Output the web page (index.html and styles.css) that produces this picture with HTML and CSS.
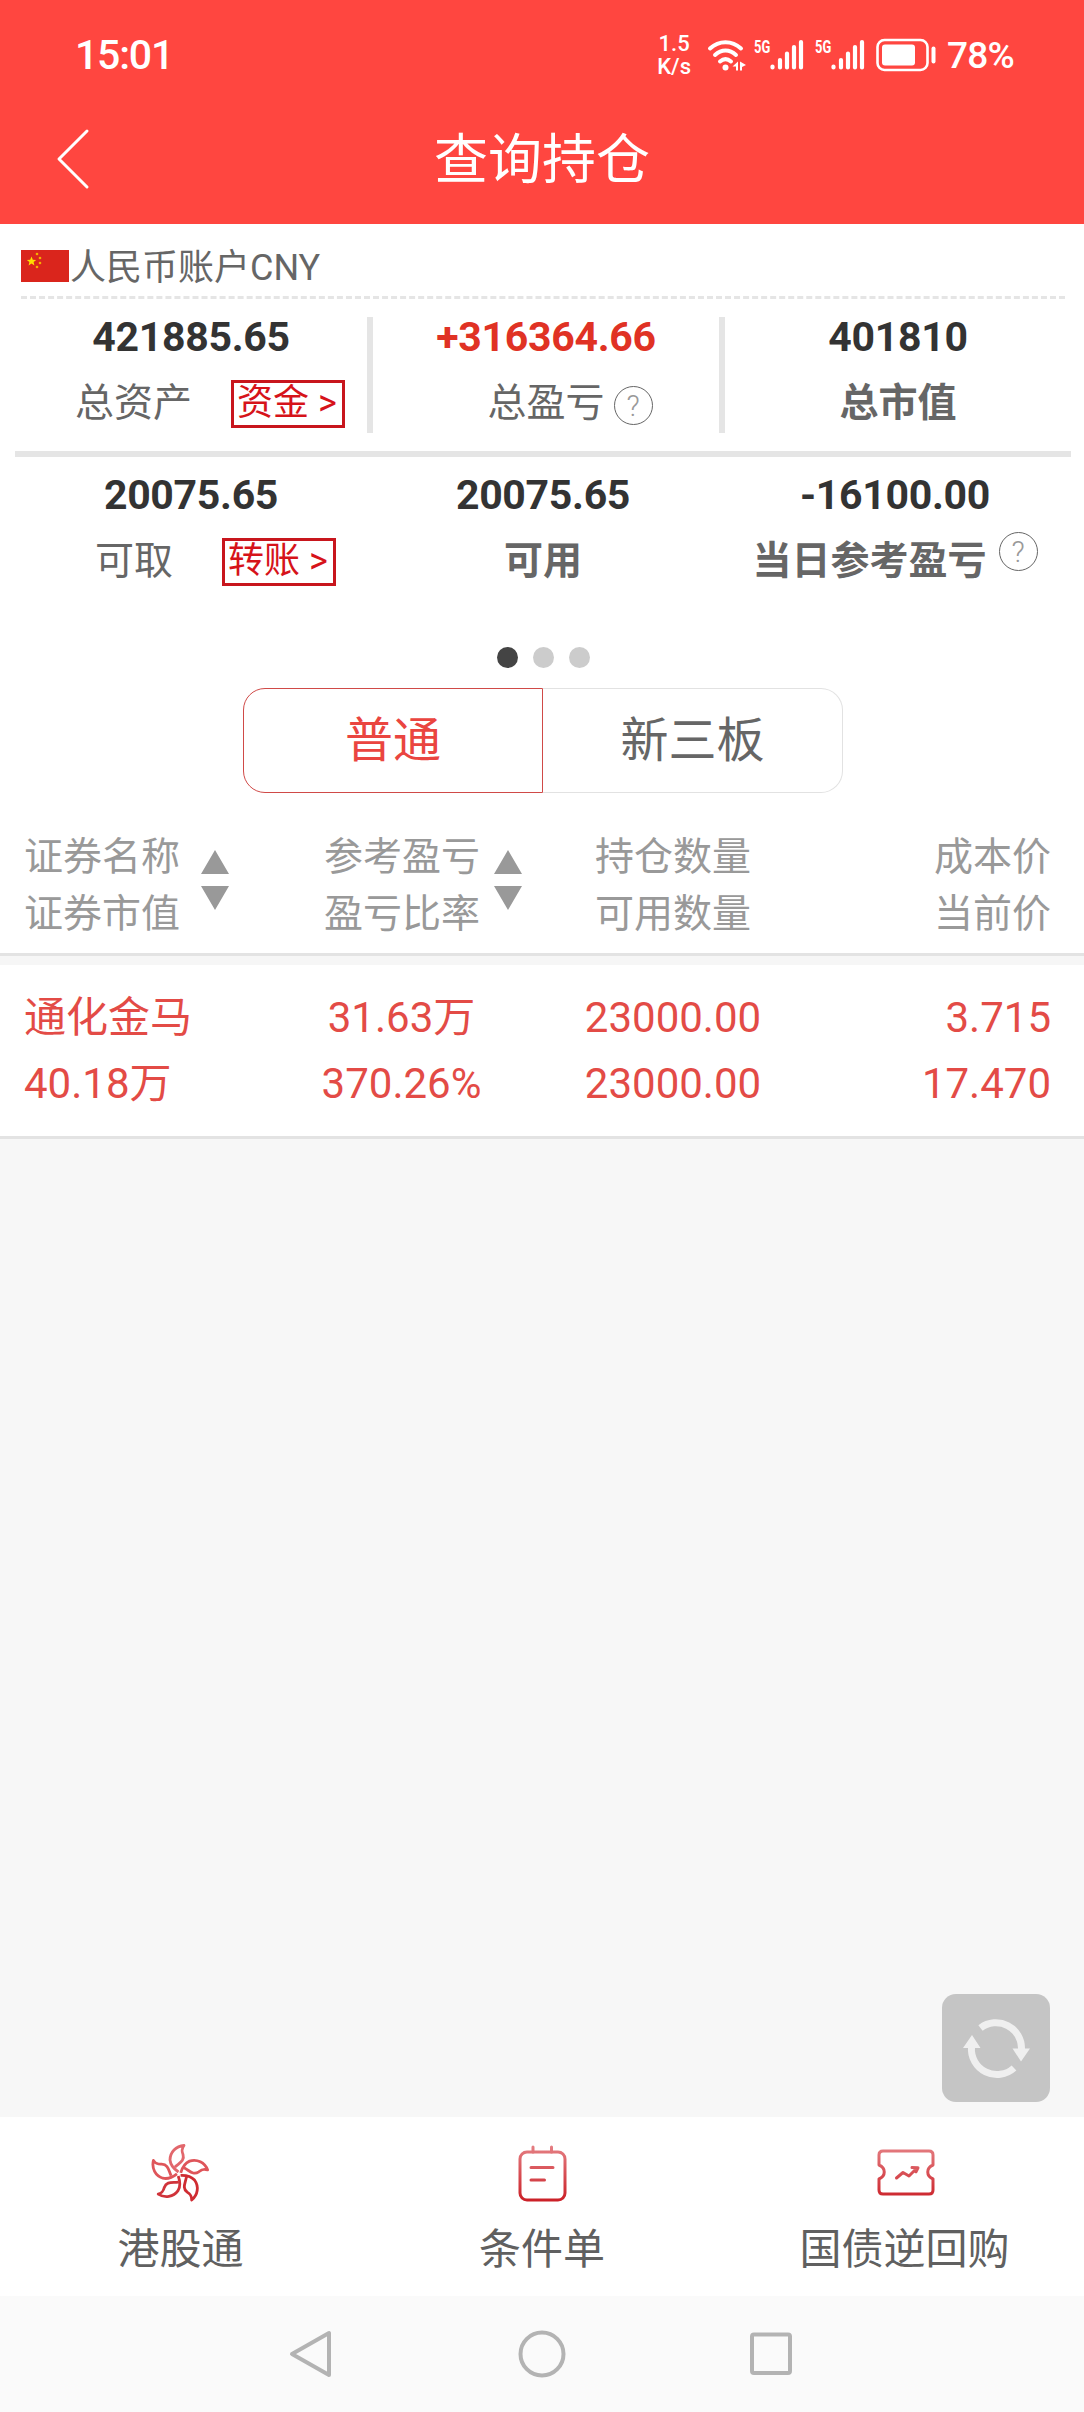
FILE: index.html
```html
<!DOCTYPE html>
<html lang="zh-CN">
<head>
    <meta charset="UTF-8">
    <meta name="viewport" content="width=device-width, initial-scale=1.0">
    <title>查询持仓</title>
    <link rel="stylesheet" href="styles.css">
</head>
<body>
    <div class="page">
        <header class="header">
            <div class="status-bar">
                <span class="time">15:01</span>
                <div class="status-icons">
                    <div class="speed"><span>1.5</span><span>K/s</span></div>
                    <svg class="wifi" width="40" height="34" viewBox="0 0 40 34" fill="none" stroke="#fff" stroke-width="4" stroke-linecap="round">
                        <path d="M3 10.5C12 2 25 2 34 10.5"/>
                        <path d="M8 17C14.5 11 22.5 11 29 17"/>
                        <path d="M13 23.5C16.5 20.5 20.5 20.5 24 23.5"/>
                        <circle cx="18.5" cy="29.5" r="3" fill="#fff" stroke="none"/>
                        <path d="M31 23.5v9h-2v-4h-3.500zM33 23.5v9h2v-3.500l4-2z" fill="#fff" stroke="none"/>
                    </svg>
                    <div class="signal">
                        <span class="net">5G</span>
                        <svg width="34" height="32" viewBox="0 0 34 32" stroke="#fff" stroke-width="4.2" stroke-linecap="round">
                            <path d="M2.5 27.5v1M10 21v7.5M17 14.5v14M24 8v20.5M31 3v25.5"/>
                        </svg>
                    </div>
                    <div class="signal">
                        <span class="net">5G</span>
                        <svg width="34" height="32" viewBox="0 0 34 32" stroke="#fff" stroke-width="4.2" stroke-linecap="round">
                            <path d="M2.5 27.5v1M10 21v7.5M17 14.5v14M24 8v20.5M31 3v25.5"/>
                        </svg>
                    </div>
                    <svg class="battery" width="60" height="34" viewBox="0 0 60 34">
                        <rect x="1.5" y="2" width="50" height="30" rx="7" fill="none" stroke="#fff" stroke-width="2.6"/>
                        <rect x="6" y="6.5" width="33" height="21" rx="3" fill="#fff"/>
                        <rect x="55.5" y="8.5" width="4" height="17" rx="2" fill="#fff"/>
                    </svg>
                    <span class="percent">78%</span>
                </div>
            </div>
            <div class="nav-bar">
                <svg class="back" width="36" height="62" viewBox="0 0 36 62" fill="none" stroke="#fff" stroke-width="3" stroke-linecap="round" stroke-linejoin="round">
                    <path d="M33 3L5 31l28 28"/>
                </svg>
                <h1>查询持仓</h1>
            </div>
        </header>

        <section class="account">
            <div class="account-name">
                <svg width="48" height="32" viewBox="0 0 48 32">
                    <rect width="48" height="32" fill="#da251c"/>
                    <path d="M10.5 6.5l1.3 3.2 3.4.2-2.6 2.2.8 3.3-2.9-1.8-2.9 1.8.8-3.3-2.6-2.2 3.4-.2z" fill="#ffde00"/>
                    <g fill="#f5b000">
                        <circle cx="16" cy="4" r="1.3"/>
                        <circle cx="19" cy="8" r="1.3"/>
                        <circle cx="19" cy="13" r="1.3"/>
                        <circle cx="16" cy="17" r="1.3"/>
                    </g>
                </svg>
                <span>人民币账户CNY</span>
            </div>

            <div class="summary summary-total">
                <div class="cell">
                    <div class="num">421885.65</div>
                    <div class="label label-funds"><span>总资产</span><a class="link-btn">资金 &gt;</a></div>
                </div>
                <div class="cell">
                    <div class="num up">+316364.66</div>
                    <div class="label label-profit"><span>总盈亏</span><i class="help">?</i></div>
                </div>
                <div class="cell">
                    <div class="num">401810</div>
                    <div class="label strong">总市值</div>
                </div>
            </div>
            <div class="summary">
                <div class="cell">
                    <div class="num">20075.65</div>
                    <div class="label label-transfer"><span>可取</span><a class="link-btn">转账 &gt;</a></div>
                </div>
                <div class="cell">
                    <div class="num">20075.65</div>
                    <div class="label strong">可用</div>
                </div>
                <div class="cell">
                    <div class="num">-16100.00</div>
                    <div class="label strong label-day"><span>当日参考盈亏</span><i class="help">?</i></div>
                </div>
            </div>

            <div class="dots">
                <span class="dot active"></span>
                <span class="dot"></span>
                <span class="dot"></span>
            </div>
        </section>

        <div class="tabs">
            <div class="tab active">普通</div>
            <div class="tab">新三板</div>
        </div>

        <section class="holdings">
            <div class="row thead">
                <div class="col sortable">
                    <div>证券名称<br>证券市值</div>
                    <svg class="sort" width="28" height="60" viewBox="0 0 28 60" fill="#999"><path d="M14 0l14 24H0zM14 60l14-24H0z"/></svg>
                </div>
                <div class="col sortable">
                    <div>参考盈亏<br>盈亏比率</div>
                    <svg class="sort" width="28" height="60" viewBox="0 0 28 60" fill="#999"><path d="M14 0l14 24H0zM14 60l14-24H0z"/></svg>
                </div>
                <div class="col">持仓数量<br>可用数量</div>
                <div class="col">成本价<br>当前价</div>
            </div>
            <div class="row tbody">
                <div class="col">通化金马<br>40.18万</div>
                <div class="col">31.63万<br>370.26%</div>
                <div class="col">23000.00<br>23000.00</div>
                <div class="col">3.715<br>17.470</div>
            </div>
        </section>

        <main class="blank">
            <button class="refresh">
                <svg width="108" height="108" viewBox="0 0 108 108">
                    <g fill="none" stroke="#efefef" stroke-width="7">
                        <path d="M38.5 34A25.5 25.5 0 0 1 79.500 55"/>
                        <path d="M72 74A25.5 25.5 0 0 1 29.5 53"/>
                    </g>
                    <path d="M70.500 54.5h17.500L79 67.5zM21 54h17.500L30 41z" fill="#efefef"/>
                </svg>
            </button>
        </main>

        <nav class="shortcuts">
            <a class="shortcut">
                <svg width="60" height="60" viewBox="-28 -31 60 60" fill="none" stroke-width="2.8" stroke-linejoin="round">
                    <defs>
                        <linearGradient id="red" gradientUnits="userSpaceOnUse" x1="0" y1="-28" x2="0" y2="28">
                            <stop offset="0" stop-color="#e58084"/>
                            <stop offset="1" stop-color="#cb2027"/>
                        </linearGradient>
                        <path id="petal" d="M-.5-2C-5-5-8.500-9-9-14C-9-22-3-28 5-28.500C2-24.500 3-22 4-19.500C6-13 0-11-4-7"/>
                    </defs>
                    <use href="#petal" stroke="#e2676c"/>
                    <use href="#petal" stroke="#df555a" transform="rotate(72)"/>
                    <use href="#petal" stroke="#cf2c32" transform="rotate(144)"/>
                    <use href="#petal" stroke="#d0333a" transform="rotate(216)"/>
                    <use href="#petal" stroke="#df555a" transform="rotate(288)"/>
                </svg>
                <span>港股通</span>
            </a>
            <a class="shortcut">
                <svg width="60" height="60" viewBox="-30 -30 60 60" fill="none" stroke="url(#red)" stroke-width="3" stroke-linecap="round">
                    <rect x="-22" y="-21" width="45" height="48" rx="7"/>
                    <path d="M-9-26v5M9.500-26v5M-11-5.500H11M-11 7H2.500"/>
                </svg>
                <span>条件单</span>
            </a>
            <a class="shortcut">
                <svg width="60" height="60" viewBox="-31 -30 60 60" fill="none" stroke="url(#red)" stroke-width="3" stroke-linecap="round" stroke-linejoin="round">
                    <path d="M-23-22H23Q27-22 27-18V-8C20-5 20 3 27 6V17Q27 21 23 21H-23Q-27 21-27 17V6C-20 3-20-5-27-8V-18Q-27-22-23-22Z"/>
                    <path d="M-9.500 5L-3-.5 3 3 11-5M6-5.500l6 .3-2 4"/>
                </svg>
                <span>国债逆回购</span>
            </a>
        </nav>

        <footer class="system-nav">
            <svg width="50" height="50" viewBox="0 0 50 50"><path d="M41 4v42L4 25z"/></svg>
            <svg width="50" height="50" viewBox="0 0 50 50"><circle cx="25" cy="25" r="21.5"/></svg>
            <svg width="50" height="50" viewBox="0 0 50 50"><rect x="6" y="5.500" width="38" height="38.500" rx="2"/></svg>
        </footer>
    </div>
</body>
</html>
```
FILE: styles.css
```css
* {
    box-sizing: border-box;
}
body {
    margin: 0;
    background: #fff;
    font-family: Roboto, "Noto Sans CJK SC", sans-serif;
    color: #666;
}
svg {
    display: block;
    flex-shrink: 0;
}
.page {
    width: 1084px;
    height: 2412px;
    display: flex;
    flex-direction: column;
}

/* 顶部 */
.header {
    height: 224px;
    background: #ff4640;
    color: #fff;
}
.status-bar {
    height: 108px;
    padding: 2px 70px 0 75px;
    display: flex;
    align-items: center;
    justify-content: space-between;
}
.time {
    font-size: 41px;
    font-weight: 500;
    letter-spacing: -1.2px;
}
.status-icons {
    display: flex;
    align-items: center;
}
.speed {
    width: 36px;
    margin-right: 15px;
    display: flex;
    flex-direction: column;
    align-items: center;
    font-size: 22px;
    font-weight: 500;
    line-height: 23px;
}
.wifi {
    margin-right: 7px;
}
.signal {
    display: flex;
    width: 61px;
}
.net {
    width: 16px;
    font-size: 19px;
    font-weight: 700;
    line-height: 16px;
    transform: scaleX(0.68);
    transform-origin: left top;
}
.battery {
    margin-right: 11px;
}
.percent {
    font-size: 37px;
    font-weight: 500;
    letter-spacing: -0.8px;
}
.nav-bar {
    height: 101px;
    padding: 0 54px;
    display: grid;
    grid-template-columns: 36px 1fr 36px;
    align-items: center;
}
.nav-bar h1 {
    margin: 0;
    padding-top: 4px;
    font-size: 54px;
    font-weight: 400;
    line-height: 80px;
    text-align: center;
}

/* 账户信息 */
.account {
    padding: 0 13px 0 15px;
}
.account-name {
    height: 75px;
    margin: 0 6px 18px 6px;
    padding-top: 11px;
    display: flex;
    align-items: center;
    gap: 1px;
    border-bottom: 3px dashed #e5e5e5;
    font-size: 36px;
    line-height: 50px;
}
.account-name span {
    padding-top: 5px;
}
.summary {
    display: grid;
    grid-template-columns: repeat(3, 1fr);
    height: 116px;
}
.summary-total {
    height: 140px;
    padding-bottom: 18px;
    margin-bottom: 18px;
    border-bottom: 6px solid #e5e5e5;
}
.summary-total .cell + .cell {
    border-left: 6px solid #e5e5e5;
}
.num {
    padding-top: 1px;
    color: #333;
    font-size: 41px;
    font-weight: 700;
    letter-spacing: -0.3px;
    line-height: 38px;
    text-align: center;
}
.num.up {
    color: #e03224;
}
.label {
    display: flex;
    justify-content: center;
    height: 48px;
    margin-top: 23px;
    font-size: 39px;
    line-height: 48px;
}
.label.strong {
    font-weight: 700;
}
.link-btn {
    width: 114px;
    height: 48px;
    margin-top: 1px;
    border: 3px solid #c8161d;
    color: #d6131a;
    font-size: 36px;
    line-height: 41px;
    text-align: center;
    white-space: nowrap;
    text-indent: -2px;
}
.label-funds {
    justify-content: flex-end;
    gap: 39px;
    padding-right: 22px;
}
.label-transfer {
    justify-content: flex-end;
    gap: 49px;
    padding-right: 31px;
}
.label-profit {
    gap: 9px;
    padding-left: 48px;
}
.label-day {
    gap: 12px;
}
.help {
    width: 39px;
    height: 39px;
    margin-top: 7px;
    border: 1.5px solid #666;
    border-radius: 50%;
    color: #999;
    font-size: 29px;
    font-style: normal;
    font-weight: 300;
    line-height: 38px;
    text-align: center;
}
.label-day .help {
    margin-top: -5px;
}
.dots {
    display: flex;
    justify-content: center;
    gap: 15px;
    padding: 56px 0 20px;
}
.dot {
    width: 21px;
    height: 21px;
    border-radius: 50%;
    background: #ccc;
}
.dot.active {
    background: #444;
}

/* 分类切换 */
.tabs {
    width: 600px;
    height: 105px;
    margin: 0 241px 0 243px;
    display: flex;
    flex-shrink: 0;
}
.tab {
    width: 300px;
    border: 1px solid #e2e2e2;
    border-left: none;
    border-radius: 0 22px 22px 0;
    font-size: 48px;
    line-height: 103px;
    text-align: center;
}
.tab.active {
    border: 1px solid #d04a48;
    border-radius: 22px 0 0 22px;
    color: #ea4540;
}

/* 持仓列表 */
.row {
    display: grid;
    border-bottom: 3px solid #e3e3e3;
}
.thead {
    grid-template-columns: 300px 271px 211px 1fr;
    height: 163px;
    padding: 36px 33px 0 24px;
    color: #999;
    font-size: 39px;
    line-height: 57px;
}
.thead .col:last-child,
.tbody .col:last-child {
    text-align: right;
}
.sortable {
    display: flex;
    gap: 21px;
}
.sortable + .sortable {
    gap: 14px;
}
.sort {
    margin-top: 21px;
}
.tbody {
    grid-template-columns: 242px 271px 272px 1fr;
    height: 183px;
    padding: 20px 33px 0 24px;
    border-top: 9px solid #f6f6f6;
    color: #e34b46;
    font-size: 42px;
    line-height: 66px;
    text-align: center;
}
.tbody .col:first-child {
    text-align: left;
}

.blank {
    flex: 1;
    display: flex;
    align-items: flex-end;
    justify-content: flex-end;
    padding: 0 34px 15px;
    background: #f7f7f7;
}
.refresh {
    width: 108px;
    height: 108px;
    padding: 0;
    border: none;
    border-radius: 14px;
    background: #c5c5c5;
}

/* 底部入口 */
.shortcuts {
    height: 179px;
    display: grid;
    grid-template-columns: 361px 362px 363px;
}
.shortcut {
    display: flex;
    flex-direction: column;
    align-items: center;
    padding-top: 26px;
    font-size: 42px;
    line-height: 60px;
    color: #606060;
}
.shortcut span {
    margin-top: 17px;
}
.system-nav {
    height: 116px;
    display: flex;
    justify-content: center;
    gap: 179px;
    padding-top: 33px;
    background: #fafafa;
    fill: none;
    stroke: #b3b3b3;
    stroke-width: 4;
    stroke-linejoin: round;
}
```
